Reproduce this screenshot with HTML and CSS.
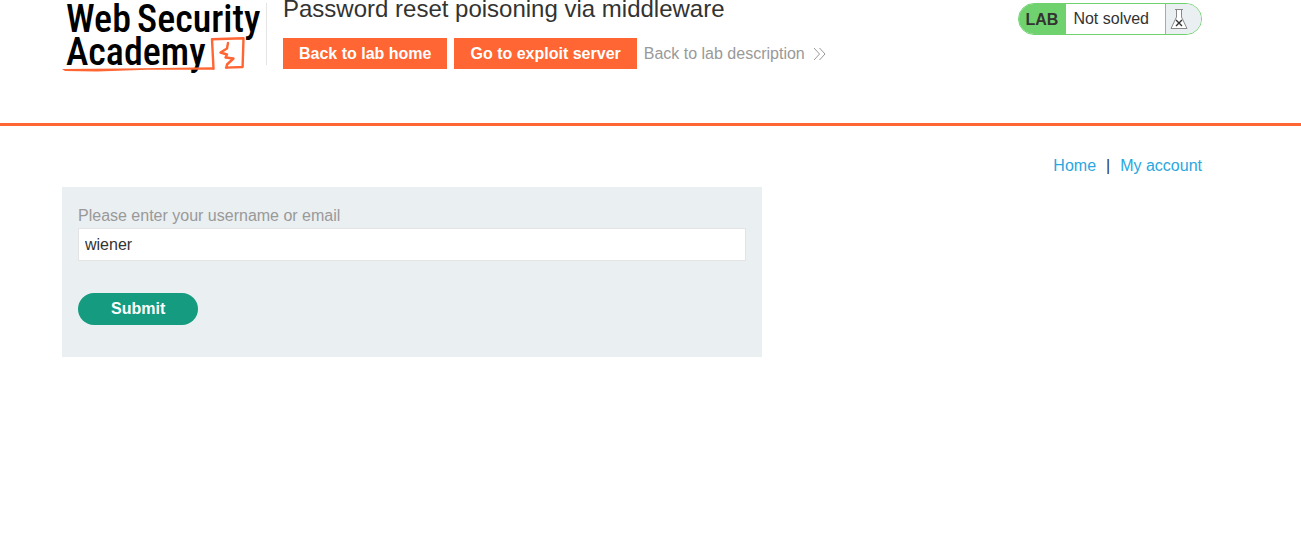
FILE: index.html
```html
<!DOCTYPE html>
<html lang="en">
<head>
<meta charset="utf-8">
<title>Password reset poisoning via middleware</title>
<link rel="stylesheet" href="styles.css">
</head>
<body>
<header class="lab-header">
  <a class="logo" href="#" aria-label="Web Security Academy">
    <svg width="200" height="74" viewBox="0 0 200 74">
      <g class="logo-text">
        <text x="4" y="32">Web</text>
        <text x="75" y="32">Security</text>
        <text x="4" y="65">Academy</text>
      </g>
      <g fill="none" stroke="#ff6633" stroke-linejoin="round" stroke-linecap="round">
        <path stroke-width="2.400" d="M151.500 68.800L150 39.200L181.500 38.200L180.600 67L164 67.600"/>
        <path stroke-width="2.400" d="M166 43L165 48.500L158.500 52.500L165 54.500L163.500 57.500L171.500 58.500L165 64.500L164.500 67.500"/>
      </g>
      <path fill="#ff6633" d="M0 69L60 68.600L151 67.200V69.800L85 69.800L35 71.500L3 71Z"/>
    </svg>
  </a>
  <div class="title">
    <h1>Password reset poisoning via middleware</h1>
    <nav class="actions">
      <a class="button" href="#">Back to lab home</a>
      <a class="button" href="#">Go to exploit server</a>
      <a class="description" href="#">Back to lab description
        <svg width="13" height="14" viewBox="0 0 13 14" aria-hidden="true"><path fill="none" stroke="#999" stroke-width="1" d="M1 1L6.500 7L1 13M6.500 1L12 7L6.500 13"/></svg>
      </a>
    </nav>
  </div>
  <div class="status">
    <span class="status-tag">LAB</span>
    <span class="status-text">Not solved</span>
    <span class="status-icon">
      <svg width="18" height="22" viewBox="0 0 18 22" aria-hidden="true">
        <path fill="#fff" stroke="#888" d="M6.500 1.500V9L1 20.500H17L11.500 9V1.500Z"/>
        <path fill="none" stroke="#888" d="M5 1.500H13"/>
        <path fill="none" stroke="#333" stroke-width="1.400" d="M6 12L12 18M12 12L6 18"/>
      </svg>
    </span>
  </div>
</header>
<main class="content">
  <nav class="links">
    <a href="#">Home</a><span>|</span><a href="#">My account</a>
  </nav>
  <form class="reset-form">
    <label for="username">Please enter your username or email</label>
    <input id="username" name="username" type="text" value="wiener">
    <button type="submit">Submit</button>
  </form>
</main>
</body>
</html>
```

FILE: styles.css
```css
* {
  box-sizing: border-box;
}

body {
  margin: 0;
  background: #fff;
  color: #333332;
  font: 16px/20px "Liberation Sans", Arial, sans-serif;
}

a {
  text-decoration: none;
}

.lab-header {
  display: flex;
  align-items: flex-start;
  min-height: 126px;
  padding: 0 99px 0 62px;
  border-bottom: 3px solid #ff6633;
}

.logo {
  flex: none;
}

.logo svg {
  display: block;
}

.logo-text {
  fill: #000;
  font: 500 38px "Roboto Condensed", Roboto, sans-serif;
}

.title {
  position: relative;
  flex: 1;
  margin-left: 5px;
  padding-left: 16px;
}

.title::before {
  content: "";
  position: absolute;
  top: 3px;
  left: -1px;
  height: 62px;
  border-left: 1px solid #e4e4e4;
}

h1 {
  margin: 0 0 20px;
  font-size: 24px;
  font-weight: 400;
  line-height: 18px;
}

.actions {
  display: flex;
  align-items: center;
  gap: 7px;
}

.button {
  padding: 6px 16px 5px;
  background: #ff6633;
  color: #fff;
  font-weight: 700;
}

.description {
  display: flex;
  align-items: center;
  gap: 8px;
  color: #999;
}

.status {
  display: flex;
  height: 32px;
  margin-top: 3px;
  overflow: hidden;
  border: 1px solid #70d26e;
  border-radius: 16px;
  line-height: 30px;
}

.status-tag {
  padding: 1px 8px 0 7px;
  background: #70d26e;
  font-weight: 700;
}

.status-text {
  padding: 0 16px 0 7px;
}

.status-icon {
  display: flex;
  align-items: center;
  padding: 0 13px 0 4px;
  border-left: 1px solid #70d26e;
  background: #eaeff2;
}

.content {
  padding: 30px 99px 0 62px;
}

.links {
  display: flex;
  justify-content: flex-end;
  gap: 10px;
  margin-bottom: 11px;
}

.links a {
  color: #29a7df;
}

.reset-form {
  display: flex;
  flex-direction: column;
  align-items: flex-start;
  max-width: 700px;
  padding: 19px 16px 32px;
  background: #eaeff2;
}

.reset-form label {
  margin-bottom: 2px;
  color: #999;
}

.reset-form input {
  width: 100%;
  height: 33px;
  padding: 0 6px;
  border: 1px solid #e4e4e4;
  border-radius: 0;
  background: #fff;
  color: #333332;
  font: inherit;
}

.reset-form button {
  height: 32px;
  margin-top: 32px;
  padding: 0 33px;
  border: 0;
  border-radius: 16px;
  background: #159b80;
  color: #fff;
  font: inherit;
  font-weight: 700;
}
```
